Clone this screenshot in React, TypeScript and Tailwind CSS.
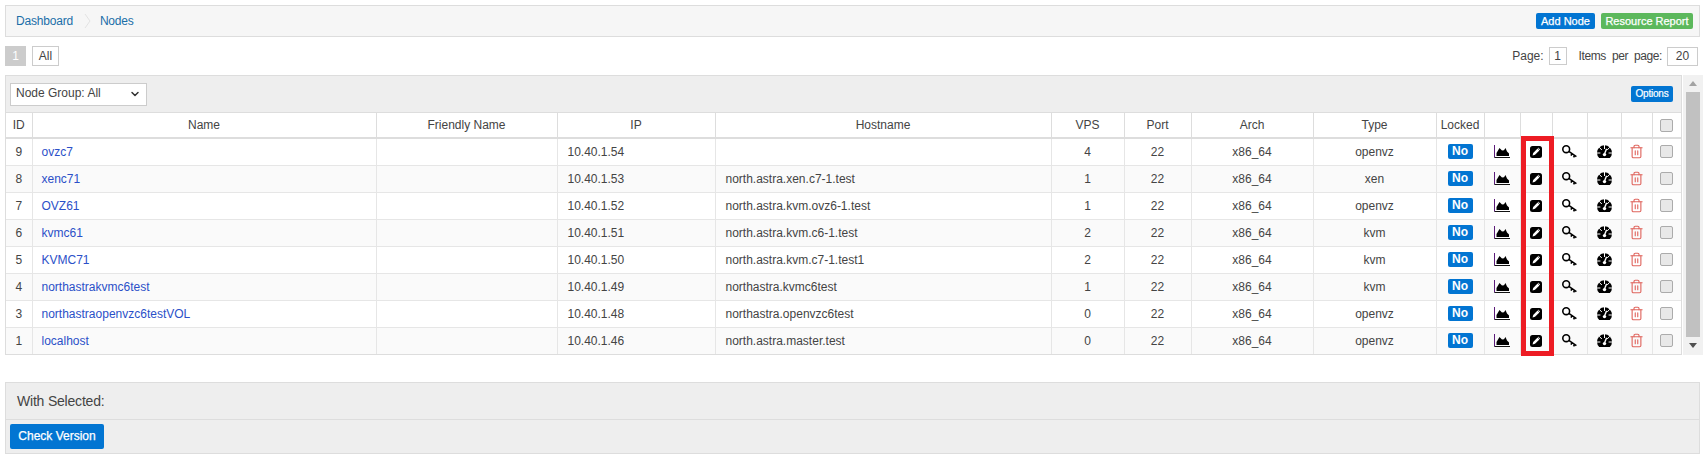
import { Trash2, ChevronDown } from "lucide-react";

type Node = {
  id: number;
  name: string;
  ip: string;
  host: string;
  vps: number;
  type: string;
};

const nodes: Node[] = [
  { id: 9, name: "ovzc7", ip: "10.40.1.54", host: "", vps: 4, type: "openvz" },
  { id: 8, name: "xenc71", ip: "10.40.1.53", host: "north.astra.xen.c7-1.test", vps: 1, type: "xen" },
  { id: 7, name: "OVZ61", ip: "10.40.1.52", host: "north.astra.kvm.ovz6-1.test", vps: 1, type: "openvz" },
  { id: 6, name: "kvmc61", ip: "10.40.1.51", host: "north.astra.kvm.c6-1.test", vps: 2, type: "kvm" },
  { id: 5, name: "KVMC71", ip: "10.40.1.50", host: "north.astra.kvm.c7-1.test1", vps: 2, type: "kvm" },
  { id: 4, name: "northastrakvmc6test", ip: "10.40.1.49", host: "northastra.kvmc6test", vps: 1, type: "kvm" },
  { id: 3, name: "northastraopenvzc6testVOL", ip: "10.40.1.48", host: "northastra.openvzc6test", vps: 0, type: "openvz" },
  { id: 1, name: "localhost", ip: "10.40.1.46", host: "north.astra.master.test", vps: 0, type: "openvz" },
];

const headers = ["ID", "Name", "Friendly Name", "IP", "Hostname", "VPS", "Port", "Arch", "Type", "Locked", "", "", "", "", ""];

function ChartIcon() {
  return (
    <svg width="16" height="13" viewBox="0 0 16 13" className="mx-auto block">
      <path d="M0.5 0V12.5" stroke="#5b1a7a" fill="none" />
      <path d="M0.5 12.5H16" stroke="#111" fill="none" />
      <path d="M2.5 11V8L5.5 3L8 5.5L10 5.2L11.5 3L13 6.5L15 8.5V11Z" fill="#000" />
    </svg>
  );
}

function EditIcon() {
  return (
    <svg width="12" height="12" viewBox="0 0 12 12" className="mx-auto block">
      <rect width="12" height="12" rx="2.5" fill="#000" />
      <path d="M2.6 9.4 3.2 7 7.6 2.6 9.4 4.4 5 8.8Z" fill="#fff" />
      <path d="M8.2 2 10 3.8" stroke="#fff" />
    </svg>
  );
}

function KeyIcon() {
  return (
    <svg width="15" height="13" viewBox="0 0 15 13" fill="none" stroke="#000" strokeWidth="1.6" className="mx-auto block">
      <circle cx="4.2" cy="4.2" r="3.4" />
      <path d="M6.8 6.4 14.4 11.6M10 8.6 9 10.6M12.6 10.4 11.6 12.4" />
    </svg>
  );
}

function GaugeIcon() {
  return (
    <svg width="15" height="13" viewBox="0 0 15 13" className="mx-auto block">
      <path d="M2.2 13A7.5 7.5 0 1 1 12.8 13Z" fill="#000" />
      <path d="M7.5 0V4M2.2 2.2 4.8 5M12.8 2.2 10.2 5M0 8H3.4M15 8H11.6" stroke="#fff" strokeWidth="1" fill="none" />
      <path d="M7.5 9 9.6 3.8" stroke="#fff" strokeWidth="1.4" fill="none" />
      <circle cx="7.5" cy="9.6" r="1.7" fill="#fff" />
    </svg>
  );
}

function Check() {
  return (
    <input
      type="checkbox"
      className="block mx-auto appearance-none w-[13px] h-[13px] rounded-[2px] border border-[#ababab] bg-[#e8e8e8]"
    />
  );
}

export default function App() {
  return (
    <div className="w-[1703px] h-[461px] overflow-hidden bg-white text-[12px] text-[#444] font-['Liberation_Sans',Arial,sans-serif]">
      <div className="mx-[5px] mt-[5px] w-[1695px] h-[32px] flex items-center justify-between border border-[#ddd] bg-[#f6f6f6] pl-[10px] pr-[6px]">
        <div className="flex items-center text-[#1a6ea8] tracking-[-0.2px]">
          <span>Dashboard</span>
          <svg width="8" height="14" viewBox="0 0 8 14" className="ml-[11px] mr-[8px]" fill="none" stroke="#e2e2e2">
            <path d="M1 0l5 7-5 7" />
          </svg>
          <span>Nodes</span>
        </div>
        <div className="flex gap-[6px] text-[11px] text-white [-webkit-text-stroke:0.25px_white]">
          <button className="w-[59px] h-[16px] rounded-[2px] bg-[#0275d2] leading-[16px]">Add Node</button>
          <button className="w-[92px] h-[16px] rounded-[2px] bg-[#5cb85c] leading-[16px]">Resource Report</button>
        </div>
      </div>

      <div className="mx-[5px] mt-[7px] w-[1693px] h-[24px] flex items-center justify-between">
        <div className="flex items-center gap-[6px]">
          <span className="w-[21px] h-[20px] bg-[#ccc] text-white text-center leading-[20px]">1</span>
          <span className="w-[27px] h-[20px] border border-[#ccc] text-center leading-[18px]">All</span>
        </div>
        <div className="flex items-center">
          <span>Page:</span>
          <span className="ml-[5px] w-[18px] h-[18px] border border-[#ccc] text-center leading-[16px]">1</span>
          <span className="ml-[12px] tracking-[-0.4px] [word-spacing:3px]">Items per page:</span>
          <span className="ml-[5px] w-[31px] h-[19px] border border-[#ccc] text-center leading-[17px]">20</span>
        </div>
      </div>

      <div className="relative ml-[5px] mt-[7px] flex w-[1698px]">
        <div className="w-[1677px] border border-[#ddd]">
          <div className="h-[37px] flex items-center justify-between bg-[#eee] border-b border-[#ddd] pl-[4px] pr-[8px]">
            <div className="relative w-[137px] h-[23px] border border-[#ccc] bg-white pl-[5px] leading-[19px] text-[#444]">
              Node Group: All
              <ChevronDown size={12} strokeWidth={3} className="absolute right-[5px] top-[4px] text-[#333]" />
            </div>
            <button className="w-[42px] h-[16px] rounded-[2px] bg-[#0275d2] text-white text-[10px] leading-[16px] tracking-[-0.2px] [-webkit-text-stroke:0.2px_white]">Options</button>
          </div>
          <table className="w-full table-fixed border-collapse">
            <colgroup>
              <col className="w-[26px]" />
              <col className="w-[344px]" />
              <col className="w-[181px]" />
              <col className="w-[158px]" />
              <col className="w-[336px]" />
              <col className="w-[73px]" />
              <col className="w-[67px]" />
              <col className="w-[122px]" />
              <col className="w-[123px]" />
              <col className="w-[48px]" />
              <col className="w-[36px]" />
              <col className="w-[32px]" />
              <col className="w-[35px]" />
              <col className="w-[34px]" />
              <col className="w-[31px]" />
              <col />
            </colgroup>
            <thead>
              <tr className="h-[25px] border-b-2 border-[#ddd]">
                {headers.map((h, i) => (
                  <th key={i} className="border-r border-[#ddd] font-normal text-center">{h}</th>
                ))}
                <th><Check /></th>
              </tr>
            </thead>
            <tbody>
              {nodes.map((n, i) => (
                <tr key={n.id} className={`h-[27px] border-b border-[#e6e6e6] last:border-b-0 ${i % 2 ? "bg-[#fafafa]" : "bg-white"}`}>
                  <td className="border-r border-[#e6e6e6] text-center">{n.id}</td>
                  <td className="border-r border-[#e6e6e6] pl-[9px] text-[#2b50c8]">{n.name}</td>
                  <td className="border-r border-[#e6e6e6]"></td>
                  <td className="border-r border-[#e6e6e6] pl-[10px]">{n.ip}</td>
                  <td className="border-r border-[#e6e6e6] pl-[10px]">{n.host}</td>
                  <td className="border-r border-[#e6e6e6] text-center">{n.vps}</td>
                  <td className="border-r border-[#e6e6e6] text-center">22</td>
                  <td className="border-r border-[#e6e6e6] text-center">x86_64</td>
                  <td className="border-r border-[#e6e6e6] text-center">{n.type}</td>
                  <td className="border-r border-[#e6e6e6]">
                    <span className="block mx-auto w-[25px] h-[15px] rounded-[2px] bg-[#0275d2] text-white font-bold text-center leading-[15px]">No</span>
                  </td>
                  <td className="border-r border-[#e6e6e6]"><ChartIcon /></td>
                  <td className="border-r border-[#e6e6e6]"><EditIcon /></td>
                  <td className="border-r border-[#e6e6e6]"><KeyIcon /></td>
                  <td className="border-r border-[#e6e6e6]"><GaugeIcon /></td>
                  <td className="border-r border-[#e6e6e6]">
                    <Trash2 size={15} strokeWidth={1.8} className="mx-auto text-[#e0655e]" />
                  </td>
                  <td><Check /></td>
                </tr>
              ))}
            </tbody>
          </table>
        </div>

        <div className="flex-1 flex flex-col items-center bg-[#f1f1f1] ml-[1px]">
          <div className="mt-[6px] w-0 h-0 border-x-[4px] border-x-transparent border-b-[5px] border-b-[#a3a3a3]" />
          <div className="mt-[6px] w-[14px] h-[245px] bg-[#c1c1c1]" />
          <div className="mt-[6px] w-0 h-0 border-x-[4px] border-x-transparent border-t-[5px] border-t-[#505050]" />
        </div>

        {/* red annotation drawn over the edit column */}
        <div className="absolute left-[1516px] top-[61px] w-[33px] h-[220px] border-[5px] border-[#ed1c24] pointer-events-none" />
      </div>

      <div className="ml-[5px] mt-[27px] w-[1695px] border border-[#ddd] bg-[#eee]">
        <div className="h-[37px] flex items-center border-b border-[#ddd] pl-[11px] text-[14px] tracking-[-0.2px]">With Selected:</div>
        <div className="h-[33px] flex items-center pl-[4px]">
          <button className="w-[94px] h-[25px] rounded-[2px] bg-[#0275d2] text-white leading-[25px] [-webkit-text-stroke:0.25px_white]">Check Version</button>
        </div>
      </div>
    </div>
  );
}
